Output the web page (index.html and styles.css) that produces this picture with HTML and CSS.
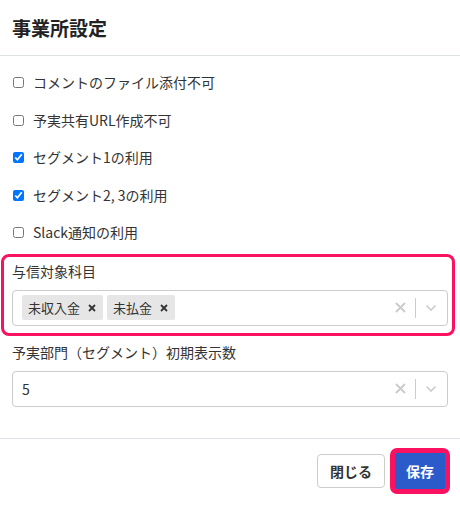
FILE: index.html
```html
<!DOCTYPE html>
<html lang="ja">
<head>
    <meta charset="UTF-8">
    <title>事業所設定</title>
    <link rel="stylesheet" href="styles.css">
</head>
<body>
    <div class="modal">
        <div class="modal-header">
            <h2 class="modal-title">事業所設定</h2>
        </div>
        <div class="modal-body">
            <label class="check-row"><input type="checkbox"> コメントのファイル添付不可</label>
            <label class="check-row"><input type="checkbox"> 予実共有URL作成不可</label>
            <label class="check-row"><input type="checkbox" checked> セグメント1の利用</label>
            <label class="check-row"><input type="checkbox" checked> セグメント2, 3の利用</label>
            <label class="check-row"><input type="checkbox"> Slack通知の利用</label>

            <div class="field highlight">
                <div class="field-label">与信対象科目</div>
                <div class="select">
                    <div class="select-values">
                        <span class="tag">未収入金<svg class="tag-x" width="8" height="8" viewBox="0 0 8 8"><path d="M1 1 L7 7 M7 1 L1 7" stroke="#333" stroke-width="1.8"/></svg></span>
                        <span class="tag">未払金<svg class="tag-x" width="8" height="8" viewBox="0 0 8 8"><path d="M1 1 L7 7 M7 1 L1 7" stroke="#333" stroke-width="1.8"/></svg></span>
                    </div>
                    <div class="select-indicators">
                        <svg class="clear" width="11" height="11" viewBox="0 0 11 11"><path d="M1 1 L10 10 M10 1 L1 10" stroke="#ccc" stroke-width="2"/></svg>
                        <span class="sep"></span>
                        <svg class="chevron" width="12" height="8" viewBox="0 0 12 8"><path d="M1.5 1.5 L6 6 L10.5 1.5" fill="none" stroke="#ccc" stroke-width="1.6"/></svg>
                    </div>
                </div>
            </div>

            <div class="field">
                <div class="field-label">予実部門（セグメント）初期表示数</div>
                <div class="select">
                    <div class="select-values">
                        <span class="single">5</span>
                    </div>
                    <div class="select-indicators">
                        <svg class="clear" width="11" height="11" viewBox="0 0 11 11"><path d="M1 1 L10 10 M10 1 L1 10" stroke="#ccc" stroke-width="2"/></svg>
                        <span class="sep"></span>
                        <svg class="chevron" width="12" height="8" viewBox="0 0 12 8"><path d="M1.5 1.5 L6 6 L10.5 1.5" fill="none" stroke="#ccc" stroke-width="1.6"/></svg>
                    </div>
                </div>
            </div>
        </div>
        <div class="modal-footer">
            <button class="btn btn-light">閉じる</button>
            <span class="btn-ring"><button class="btn btn-primary">保存</button></span>
        </div>
    </div>
</body>
</html>
```

FILE: styles.css
```css
body {
    margin: 0;
    background: #fff;
    font-family: "Noto Sans CJK JP", "Noto Sans", sans-serif;
    color: #212529;
}

.modal {
    width: 460px;
}

.modal-header {
    height: 55px;
    border-bottom: 1px solid #dee2e6;
    padding: 0 12px;
    display: flex;
    align-items: center;
}

.modal-title {
    margin: 0;
    font-size: 19px;
    font-weight: bold;
    color: #222;
}

.modal-body {
    padding: 16px 12px 18px;
}

.check-row {
    display: flex;
    align-items: center;
    font-size: 14px;
    line-height: 21px;
    height: 21px;
    margin-bottom: 16.5px;
    color: #333;
}

.check-row input {
    width: 11px;
    height: 11px;
    margin: 0 9px 0 1px;
}

.field {
    margin-bottom: 12px;
}

.field-label {
    font-size: 14px;
    line-height: 21px;
    color: #333;
    margin-bottom: 8px;
}

.highlight {
    margin: -6px -7px 6px -11px;
    padding: 4px 4px 7px 8px;
    border: 3px solid #fa1160;
    border-radius: 8px;
}

.select {
    display: flex;
    align-items: center;
    min-height: 34px;
    border: 1px solid #ccc;
    border-radius: 4px;
    background: #fff;
}

.select-values {
    flex: 1;
    display: flex;
    align-items: center;
    gap: 4px;
    padding: 0 9px;
}

.tag {
    display: inline-flex;
    align-items: center;
    height: 25px;
    background: #e6e6e6;
    border-radius: 2px;
    padding-left: 6px;
    font-size: 13px;
    color: #333;
}

.tag-x {
    margin: 0 7px 0 8px;
}

.single {
    font-size: 14px;
    color: #333;
}

.select-indicators {
    display: flex;
    align-items: center;
    height: 34px;
}

.clear {
    margin: 0 9px 0 8px;
}

.sep {
    width: 1px;
    height: 20px;
    background: #ccc;
}

.chevron {
    margin: 0 10px 0 9px;
}

.modal-footer {
    border-top: 1px solid #dee2e6;
    margin-top: 1px;
    padding: 9px 10px 12px;
    display: flex;
    justify-content: flex-end;
    align-items: center;
    gap: 5px;
}

.btn {
    font-family: inherit;
    font-size: 14px;
    font-weight: bold;
    height: 34px;
    border-radius: 4px;
    padding: 0 12px;
    cursor: pointer;
}

.btn-light {
    background: #fff;
    border: 1px solid #ccc;
    color: #333;
}

.btn-ring {
    display: inline-flex;
    border: 5px solid #fa1160;
    border-radius: 7px;
}

.btn-primary {
    background: #2b5bcb;
    border: none;
    border-radius: 1px;
    color: #fff;
    height: 36px;
    padding: 0 11px;
}
```
